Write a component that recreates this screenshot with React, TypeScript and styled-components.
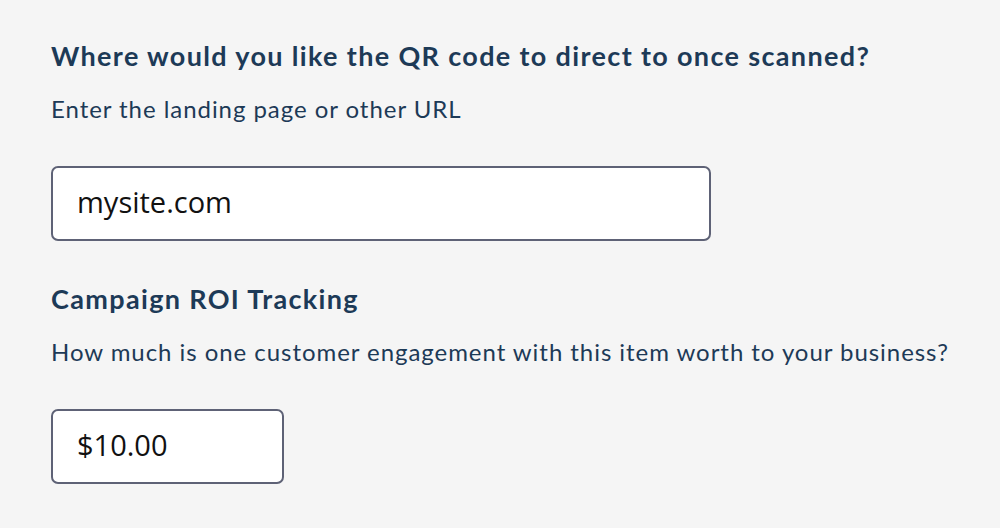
import * as React from 'react';
import styled, { createGlobalStyle } from 'styled-components';

const GlobalStyle = createGlobalStyle`
    html, body {
        margin: 0;
        padding: 0;
        background: #f5f5f5;
    }
    body {
        font-family: 'Lato', 'Liberation Sans', sans-serif;
    }
`

const Page = styled('div')({
    display: 'flex',
    flexDirection: 'column',
    padding: '40px 51px 0 51px',
    minHeight: '528px',
    boxSizing: 'border-box',
    backgroundColor: '#f5f5f5'
})

const Section = styled('div')({
    display: 'flex',
    flexDirection: 'column',
    alignItems: 'flex-start',
    marginBottom: '42px'
})

const Heading = styled('h2')({
    margin: 0,
    fontFamily: "'Lato', sans-serif",
    fontWeight: 700,
    fontSize: '27px',
    lineHeight: '32px',
    letterSpacing: '1.35px',
    color: '#1d3a57'
})

const Hint = styled('p')({
    margin: '23px 0 0 0',
    fontFamily: "'Lato', sans-serif",
    fontWeight: 400,
    fontSize: '24px',
    lineHeight: '28px',
    letterSpacing: '0.95px',
    color: '#1d3a57'
})

const Field = styled('input')<{ $width: number }>(props => ({
    marginTop: '43px',
    width: `${props.$width}px`,
    height: '75px',
    boxSizing: 'border-box',
    padding: '0 24px 4px 24px',
    border: '2px solid #5e6276',
    borderRadius: '7px',
    backgroundColor: '#fff',
    fontFamily: "'Open Sans', sans-serif",
    fontSize: '29px',
    color: '#111',
    outline: 'none'
}))

type Question = {
    title: string
    hint: string
    value: string
    width: number
}

const questions: Question[] = [
    {
        title: 'Where would you like the QR code to direct to once scanned?',
        hint: 'Enter the landing page or other URL',
        value: 'mysite.com',
        width: 660
    },
    {
        title: 'Campaign ROI Tracking',
        hint: 'How much is one customer engagement with this item worth to your business?',
        value: '$10.00',
        width: 233
    }
]

export default function App() {
    return (
        <React.Fragment>
            <GlobalStyle />
            <Page>
                {questions.map((q, i) =>
                    <Section key={`q-${i}`}>
                        <Heading>{q.title}</Heading>
                        <Hint>{q.hint}</Hint>
                        <Field $width={q.width} type="text" defaultValue={q.value} readOnly />
                    </Section>
                )}
            </Page>
        </React.Fragment>
    )
}
